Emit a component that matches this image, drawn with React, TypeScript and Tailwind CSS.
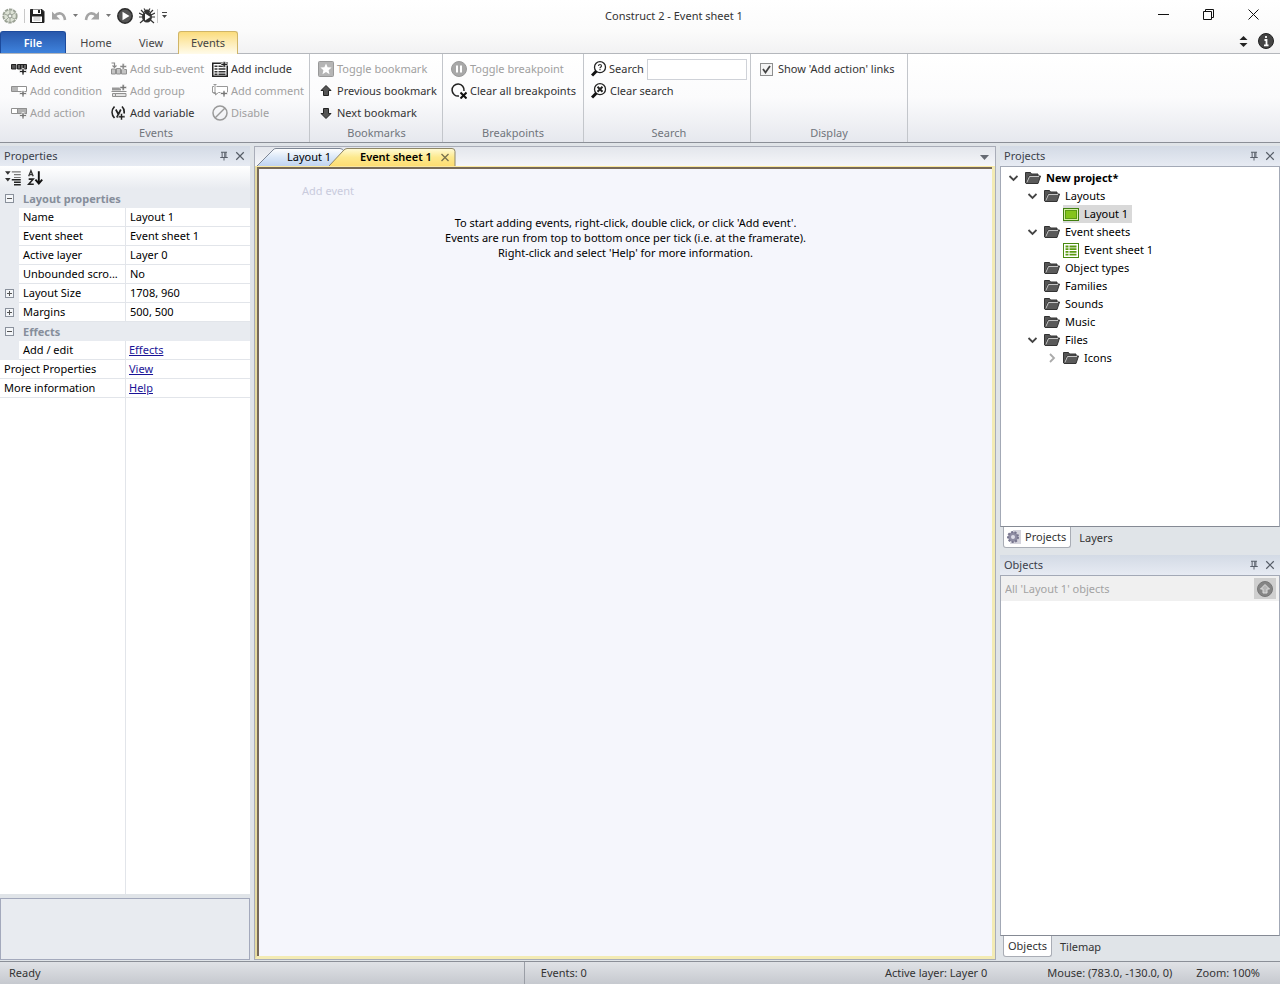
import type { ReactNode } from "react";

function Svg({ children, className = "w-4 h-4" }: { children: ReactNode; className?: string }) {
  return (
    <svg viewBox="0 0 16 16" className={`shrink-0 ${className}`} fill="none" aria-hidden="true">
      {children}
    </svg>
  );
}

const PLUS = "M11 7.500h2v2h2.500v2H13V14h-2v-2.500H8.500v-2H11z";
const PLUS_TOP = "M11.200.500h2v2h2.300v2h-2.300v2h-2v-2H9v-2h2.200z";

const icons: Record<string, ReactNode> = {
  event: (
    <Svg>
      <path d="M.5 3.500h4.500v4.500H.5z" fill="#555" stroke="#222" />
      <path d="M6.500 3.500h9v4.500h-9z" fill="#666" stroke="#222" />
      <path d="M9.500 3.500V8M12.500 3.500V8" stroke="#222" />
      <path d={PLUS} fill="#222" stroke="#fff" strokeWidth=".7" />
    </Svg>
  ),
  condition: (
    <Svg>
      <path d="M.5 3.500h15v5H.5z" fill="#fff" stroke="#8f8f8f" />
      <path d="M1 4h6v4H1z" fill="#b5b5b5" />
      <path d={PLUS} fill="#777" stroke="#fff" strokeWidth=".7" />
    </Svg>
  ),
  action: (
    <Svg>
      <path d="M.5 3.500h15v5H.5z" fill="#fff" stroke="#8f8f8f" />
      <path d="M6.500 3.500h9v5h-9z" fill="#b0b0b0" stroke="#8f8f8f" />
      <path d={PLUS} fill="#777" stroke="#fff" strokeWidth=".7" />
    </Svg>
  ),
  subEvent: (
    <Svg>
      <path d="M.5 2h3v3.500M1.500 4.500l2 2 2-2" stroke="#888" strokeWidth="1.200" />
      <path d="M.5 8h4v5h-4zM5.500 7.500h4V13h-4zM10.500 8.500h5V13h-5z" fill="#c4c4c4" stroke="#909090" />
      <path d={PLUS_TOP} transform="translate(0 2)" fill="#888" stroke="#fff" strokeWidth=".5" />
    </Svg>
  ),
  group: (
    <Svg>
      <path d="M1 4.500h9v3H1z" fill="#999" />
      <path d="M.5 8.500h15M1.500 10.500h3v3h-3zM4.500 10.500h10.500v3H4.500z" stroke="#909090" fill="#e2e2e2" />
      <path d={PLUS_TOP} transform="translate(0 1)" fill="#777" stroke="#fff" strokeWidth=".5" />
    </Svg>
  ),
  variable: (
    <Svg>
      <path d="M3.500 1.500C.3 5 .3 9.500 3.500 13M11 1.500c2 2 2.500 4.500 2 7" stroke="#222" strokeWidth="1.700" />
      <path d="m4.800 4.500 2.700 5M9.800 4.500l-4 8" stroke="#222" strokeWidth="1.700" />
      <path d="M9.500 8.500h2v2.300H14v2h-2.500V15h-2v-2.200H7.300v-2h2.200z" fill="#222" stroke="#fff" strokeWidth=".5" />
    </Svg>
  ),
  include: (
    <Svg>
      <path d="M.75 2.250h14.500v13H.75z" fill="#fff" stroke="#222" strokeWidth="1.500" />
      <path d="M2.500 5.250h3M6.500 5.250h7M2.500 8h3M6.500 8h7M2.500 10.750h3M6.500 10.750h7M2.500 13.250h3M6.500 13.250h7" stroke="#333" strokeWidth="1.600" />
      <path d={PLUS_TOP} fill="#222" stroke="#fff" strokeWidth=".6" />
    </Svg>
  ),
  comment: (
    <Svg>
      <path d="M4.500 3.500h11v6h-9l-3 2.500V9.500h-3v-6h1.500" stroke="#999" fill="#fff" />
      <path d="M1.500 1.500h3M3 1.500v9M1.500 10.500h3" stroke="#999" />
      <path d={PLUS} fill="#777" stroke="#fff" strokeWidth=".7" />
    </Svg>
  ),
  disable: (
    <Svg>
      <circle cx="8" cy="8" r="7" stroke="#999" strokeWidth="1.500" />
      <path d="m3 13 10-10" stroke="#999" strokeWidth="1.500" />
    </Svg>
  ),
  bookmark: (
    <Svg>
      <rect x=".5" y=".5" width="15" height="15" rx="1" fill="#b5b5b5" stroke="#999" />
      <path d="m8 2.500 1.600 3.800 4 .3-3 2.600.9 4L8 11l-3.500 2.200.9-4-3-2.600 4-.3z" fill="#fff" />
    </Svg>
  ),
  up: (
    <Svg>
      <path d="m8 2.500 5 5h-2.500v5h-5v-5H3z" fill="#555" stroke="#222" strokeLinejoin="round" />
    </Svg>
  ),
  down: (
    <Svg>
      <path d="m8 13.500 5-5h-2.500v-5h-5v5H3z" fill="#555" stroke="#222" strokeLinejoin="round" />
    </Svg>
  ),
  breakpoint: (
    <Svg>
      <circle cx="8" cy="8" r="7.500" fill="#a8a8a8" stroke="#999" />
      <path d="M6 4.500v7M10 4.500v7" stroke="#fff" strokeWidth="2" />
    </Svg>
  ),
  clearBreakpoints: (
    <Svg>
      <path d="M8 13A6 6 0 1 1 13 8" stroke="#222" strokeWidth="1.500" />
      <path d="m9.500 9.500 6 6m0-6-6 6" stroke="#111" strokeWidth="2" />
    </Svg>
  ),
  search: (
    <Svg>
      <circle cx="9" cy="6.200" r="5.500" fill="#fff" stroke="#222" strokeWidth="1.300" />
      <path d="M7.500 5c0-2 3-2 3 0 0 1-1.500 1-1.500 2.300M9 8v1.200" stroke="#333" strokeWidth="1.200" />
      <path d="m1 14.500 4.500-4.500" stroke="#111" strokeWidth="3" />
    </Svg>
  ),
  clearSearch: (
    <Svg>
      <circle cx="9" cy="6.200" r="5.500" fill="#fff" stroke="#222" strokeWidth="1.300" />
      <path d="m6.500 3.700 5 5m0-5-5 5" stroke="#222" strokeWidth="2" />
      <path d="m1 14.500 4.500-4.500" stroke="#111" strokeWidth="3" />
    </Svg>
  ),
  folder: (
    <Svg>
      <path d="M.5 13V2.500h5l1 1.500H13v2" fill="#555" stroke="#333" />
      <path d="M1 13.500 4 6h11.500l-2.500 7.500z" fill="#5a5a5a" stroke="#333" />
      <path d="M1.800 12.500 4.500 6.500H14" stroke="#d5d5d5" strokeWidth=".9" />
    </Svg>
  ),
  layout: (
    <Svg>
      <rect x=".5" y="2.500" width="15" height="12" fill="#d8f0a8" stroke="#3f7f10" />
      <rect x="2.500" y="4.500" width="11" height="8" fill="#84c41c" stroke="#5b9a14" />
    </Svg>
  ),
  sheet: (
    <Svg>
      <rect x=".5" y="1.500" width="15" height="14" fill="#fff" stroke="#4a8a10" />
      <path d="M2.500 4.500h3m1 0h7M2.500 7.200h3m1 0h7M2.500 9.900h3m1 0h7M2.500 12.600h3m1 0h7" stroke="#5c9c14" strokeWidth="1.800" />
    </Svg>
  ),
};

function RibbonButton({ icon, label, disabled = false }: { icon: string; label: string; disabled?: boolean }) {
  return (
    <button disabled={disabled} className="flex h-[22px] items-center gap-[3px] whitespace-nowrap text-[#333] disabled:text-[#a0a0a0]">
      {icons[icon]}
      {label}
    </button>
  );
}

function RibbonGroup({ title, className, children }: { title: string; className: string; children: ReactNode }) {
  return (
    <section className={`flex flex-col justify-between border-r border-[#c3c6cb] pt-1 ${className}`}>
      {children}
      <h2 className="pb-px text-center leading-4 text-[#71757c]">{title}</h2>
    </section>
  );
}

function PanelHeader({ title }: { title: string }) {
  return (
    <header className="flex h-5 shrink-0 items-center justify-between bg-linear-to-b from-[#d3dae5] to-[#e7ebf3] pl-1 pr-1 text-[#3b404a]">
      <h2>{title}</h2>
      <div className="flex gap-1">
        <button aria-label={`Pin ${title}`}>
          <Svg className="h-3 w-3">
            <path d="M4 3h8M5.500 3v6.500M9 3v6.500M10.500 3v6.500M3 10h10M8 10v4" stroke="#555c66" strokeWidth="1.300" />
          </Svg>
        </button>
        <button aria-label={`Close ${title}`}>
          <Svg className="h-3 w-3">
            <path d="m3 3 10 10M13 3 3 13" stroke="#555c66" strokeWidth="1.600" />
          </Svg>
        </button>
      </div>
    </header>
  );
}

function Expander({ open }: { open: boolean }) {
  return (
    <button aria-label={open ? "Collapse" : "Expand"} className="block pl-[5px]">
      <svg viewBox="0 0 9 9" className="h-[9px] w-[9px]" fill="none" aria-hidden="true">
        <rect x=".5" y=".5" width="8" height="8" fill="#f4f6f9" stroke="#8a919c" />
        <path d={open ? "M2 4.500h5" : "M2 4.500h5M4.500 2v5"} stroke="#555" />
      </svg>
    </button>
  );
}

function CategoryRow({ title }: { title: string }) {
  return (
    <tr className="h-[19px] bg-[#e8ebf0]">
      <td className="p-0">
        <Expander open />
      </td>
      <th colSpan={2} className="p-0 pl-1 text-left font-bold text-[#868e9b]">{title}</th>
    </tr>
  );
}

interface Property {
  name: string;
  value: string;
  expandable?: boolean;
}

const layoutProperties: Property[] = [
  { name: "Name", value: "Layout 1" },
  { name: "Event sheet", value: "Event sheet 1" },
  { name: "Active layer", value: "Layer 0" },
  { name: "Unbounded scro...", value: "No" },
  { name: "Layout Size", value: "1708, 960", expandable: true },
  { name: "Margins", value: "500, 500", expandable: true },
];

function PropertiesPanel() {
  return (
    <aside className="flex w-[250px] shrink-0 flex-col">
      <PanelHeader title="Properties" />
      <div className="flex h-[23px] shrink-0 items-center gap-1 bg-linear-to-b from-white to-[#e8ebf0] pl-[5px]">
        <button aria-label="Categorised">
          <Svg className="h-[18px] w-[18px]">
            <path d="M0 2h5L2.500 5zM0 8h5l-2.500 3z" fill="#333" />
            <path d="M6 2.500h8M8 5h6M8 7.500h6" stroke="#777" />
            <path d="M6 9.500h8M8 11.700h6M8 14h6" stroke="#222" strokeWidth="1.300" />
          </Svg>
        </button>
        <button aria-label="Alphabetical">
          <Svg className="h-[18px] w-[18px]">
            <path d="M1.500 6.500 3.500 1.500l2 5M2.300 5h2.500" stroke="#333" strokeWidth="1.200" />
            <path d="M1.500 9H5.500L1.500 13.500H6" stroke="#222" strokeWidth="1.400" />
            <path d="M10.500 2v10M7.500 9.500l3 3.500 3-3.500" stroke="#111" strokeWidth="1.700" />
          </Svg>
        </button>
      </div>
      <table className="w-full shrink-0 table-fixed border-separate border-spacing-0 bg-white text-black">
        <colgroup>
          <col className="w-[19px]" />
          <col className="w-[107px]" />
          <col />
        </colgroup>
        <tbody>
          <CategoryRow title="Layout properties" />
          {layoutProperties.map((p) => (
            <tr key={p.name} className="h-[19px]">
              <td className="bg-[#e8ebf0] p-0">{p.expandable && <Expander open={false} />}</td>
              <td className="whitespace-nowrap border-r border-b border-[#e2e5ea] p-0 pl-1">{p.name}</td>
              <td className="border-b border-[#e2e5ea] p-0 pl-1">{p.value}</td>
            </tr>
          ))}
          <CategoryRow title="Effects" />
          <tr className="h-[19px]">
            <td className="bg-[#e8ebf0] p-0" />
            <td className="border-r border-b border-[#e2e5ea] p-0 pl-1">Add / edit</td>
            <td className="border-b border-[#e2e5ea] p-0 pl-[3px]">
              <a href="#effects" className="text-[#1a1496] underline">Effects</a>
            </td>
          </tr>
          <tr className="h-[19px]">
            <td colSpan={2} className="border-r border-b border-[#e2e5ea] p-0 pl-1">Project Properties</td>
            <td className="border-b border-[#e2e5ea] p-0 pl-[3px]">
              <a href="#project" className="text-[#1a1496] underline">View</a>
            </td>
          </tr>
          <tr className="h-[19px]">
            <td colSpan={2} className="border-r border-b border-[#e2e5ea] p-0 pl-1">More information</td>
            <td className="border-b border-[#e2e5ea] p-0 pl-[3px]">
              <a href="#help" className="text-[#1a1496] underline">Help</a>
            </td>
          </tr>
        </tbody>
      </table>
      <div className="min-h-0 flex-1 bg-white">
        <div className="h-full w-[126px] border-r border-[#e2e5ea]" />
      </div>
      <div className="mt-1 h-[62px] shrink-0 border border-[#a3a9bc] bg-[#e8ebf0]" />
    </aside>
  );
}

function EventSheet() {
  return (
    <main className="flex min-w-0 flex-1 flex-col border border-[#a9adb8]">
      <div className="flex h-[19px] shrink-0 items-end justify-between bg-linear-to-b from-[#e3e6ec] to-[#f5f6f9] pr-0.5">
        <div className="flex">
          <button className="relative h-[18px] w-[92px] pl-[32px] text-left text-black">
            <svg viewBox="0 0 92 18" className="absolute inset-0 h-full w-full" aria-hidden="true">
              <defs>
                <linearGradient id="blueTab" x2="0" y2="1">
                  <stop offset="0" stopColor="#fff" />
                  <stop offset=".5" stopColor="#dbe8f8" />
                  <stop offset="1" stopColor="#c0d3f0" />
                </linearGradient>
              </defs>
              <path d="M2 18 18 2q1-1.500 3-1.500h64q3 0 4 3L75 18" fill="url(#blueTab)" stroke="#7d8694" />
            </svg>
            <span className="relative">Layout 1</span>
          </button>
          <button className="relative -ml-[18px] h-[18px] w-[127px] pl-[31px] text-left font-semibold text-black">
            <svg viewBox="0 0 127 18" className="absolute inset-0 h-full w-full" aria-hidden="true">
              <defs>
                <linearGradient id="goldTab" x2="0" y2="1">
                  <stop offset="0" stopColor="#fffbd8" />
                  <stop offset=".5" stopColor="#fde98d" />
                  <stop offset="1" stopColor="#fddc72" />
                </linearGradient>
              </defs>
              <path d="M0 18 14 3q2-2.500 4-2.500h105q3 0 3 3V18" fill="url(#goldTab)" stroke="#8f8766" />
              <path d="m112.500 6 7 7m0-7-7 7" stroke="#77704e" strokeWidth="1.300" />
            </svg>
            <span className="relative">Event sheet 1</span>
          </button>
        </div>
        <button aria-label="Open tabs" className="flex h-[18px] items-center px-1">
          <svg viewBox="0 0 9 5" className="h-[5px] w-[9px]" aria-hidden="true">
            <path d="M0 0h9L4.500 5z" fill="#666b73" />
          </svg>
        </button>
      </div>
      <div className="flex min-h-0 flex-1 border-[3px] border-t border-l-2 border-[#f3ebb4] border-t-[#fbe9a0] border-l-[#e6dba0]">
        <div className="flex-1 border-t-2 border-l-2 border-[#776a58] bg-[#f5f6fc] pt-[14px]">
          <button className="block pl-[43px] leading-4 text-[#c9cbdc]">Add event</button>
          <p className="pt-4 text-center leading-[15px] text-black">
            To start adding events, right-click, double click, or click 'Add event'.
            <br />
            Events are run from top to bottom once per tick (i.e. at the framerate).
            <br />
            Right-click and select 'Help' for more information.
          </p>
        </div>
      </div>
    </main>
  );
}

function TreeItem({ label, icon = "folder", open, bold = false, selected = false, children }: {
  label: string;
  icon?: string;
  open?: boolean;
  bold?: boolean;
  selected?: boolean;
  children?: ReactNode;
}) {
  return (
    <li>
      <div className="flex h-[18px] items-center">
        <span className="flex w-[17px] shrink-0 justify-start">
          {open !== undefined && (
            <button aria-label={open ? `Collapse ${label}` : `Expand ${label}`}>
              <svg viewBox="0 0 10 10" className="h-[10px] w-[10px]" fill="none" aria-hidden="true">
                <path d={open ? "m1.500 3 4 4 4-4" : "m4 1 4 4-4 4"} stroke={open ? "#444" : "#aaa"} strokeWidth="1.800" />
              </svg>
            </button>
          )}
        </span>
        <span className={`flex h-[18px] items-center gap-[3px] pr-1 ${selected ? "bg-[#d9d9d9]" : ""}`}>
          {icons[icon]}
          <span className={`pl-0.5 whitespace-nowrap ${bold ? "font-bold" : ""}`}>{label}</span>
        </span>
      </div>
      {children && <ul className="pl-[19px]">{children}</ul>}
    </li>
  );
}

function DockTabs({ tabs, gear = false }: { tabs: string[]; gear?: boolean }) {
  return (
    <div className="flex h-6 shrink-0 items-start pl-[3px] text-[#333]">
      <button className="flex h-[21px] items-center gap-[3px] rounded-b-[3px] border border-t-0 border-[#a9adb5] bg-white px-1">
        {gear && (
          <Svg className="-ml-0.5 h-4 w-4">
            <path d="M7 1h8v14H4z" fill="#d4d3dc" />
            <circle cx="7" cy="8" r="5" fill="#8f8da3" stroke="#77758e" strokeDasharray="2 1.500" strokeWidth="2" />
            <circle cx="7" cy="8" r="2" fill="#dddce8" />
          </Svg>
        )}
        {tabs[0]}
      </button>
      <button className="h-[21px] px-2">{tabs[1]}</button>
    </div>
  );
}

function SidePanels() {
  return (
    <aside className="flex w-[280px] shrink-0 flex-col">
      <section className="flex h-[405px] shrink-0 flex-col">
        <PanelHeader title="Projects" />
        <div className="flex-1 border border-[#a3a9b6] border-b-[#858a94] bg-white pt-0.5 pl-[7px] text-black">
          <ul>
            <TreeItem label="New project*" open bold>
              <TreeItem label="Layouts" open>
                <TreeItem label="Layout 1" icon="layout" selected />
              </TreeItem>
              <TreeItem label="Event sheets" open>
                <TreeItem label="Event sheet 1" icon="sheet" />
              </TreeItem>
              <TreeItem label="Object types" />
              <TreeItem label="Families" />
              <TreeItem label="Sounds" />
              <TreeItem label="Music" />
              <TreeItem label="Files" open>
                <TreeItem label="Icons" open={false} />
              </TreeItem>
            </TreeItem>
          </ul>
        </div>
        <DockTabs tabs={["Projects", "Layers"]} gear />
      </section>
      <section className="flex min-h-0 flex-1 flex-col pt-1">
        <PanelHeader title="Objects" />
        <div className="flex-1 border border-[#a3a9b6] border-b-[#858a94] bg-white">
          <div className="flex h-[25px] items-center bg-[#f0f0f0] pr-[3px]">
            <input
              aria-label="Objects filter"
              disabled
              defaultValue="All 'Layout 1' objects"
              className="min-w-0 flex-1 pl-1 text-[#a3a3a3]"
            />
            <button aria-label="Up one level" className="flex h-[21px] w-[22px] items-center justify-center bg-[#cfcfcf]">
              <Svg>
                <circle cx="8" cy="8" r="7.500" fill="#858585" stroke="#777" />
                <path d="m8 3.500 4.500 4.500H10v4H6V8H3.500z" fill="#b5b5b5" stroke="#ddd" />
              </Svg>
            </button>
          </div>
        </div>
        <DockTabs tabs={["Objects", "Tilemap"]} />
      </section>
    </aside>
  );
}

function TitleBar() {
  return (
    <header className="flex h-[31px] shrink-0 items-center bg-linear-to-b from-white to-[#fbfbfb]">
      <div className="flex w-[207px] shrink-0 items-center">
        <Svg className="ml-[2px] h-4 w-4">
          <circle cx="8" cy="8" r="6.300" fill="#d3d9cb" stroke="#9aa194" strokeWidth="2.600" strokeDasharray="3.200 .8" />
          <circle cx="8" cy="8" r="5.800" fill="#dde2d6" />
          <path d="M8 2v4M8 10v4M2.500 6l4 1.500M13 5l-3.500 2M4 12l2.500-2.500M13 11l-3.500-1.500" stroke="#a0a79a" />
          <circle cx="8" cy="8" r="2" fill="#f1f3ee" stroke="#8c9388" />
        </Svg>
        <span className="ml-[6px] h-[14px] w-px bg-[#c8c8c8]" />
        <button aria-label="Save" className="ml-1">
          <Svg>
            <path d="M1.500 1.500h11.500l2 2v11h-13.500z" fill="#222" stroke="#222" />
            <path d="M4 1.500h8v4.500H4z" fill="#fff" />
            <path d="M9 2h2v3H9z" fill="#222" />
            <path d="M3 8.500h10v5.500H3z" fill="#fff" />
            <path d="M4.500 10h7M4.500 12h7" stroke="#bbb" />
          </Svg>
        </button>
        <button aria-label="Undo" className="ml-[6px]">
          <Svg>
            <path d="M3.500 8C7 4 13 4 14 12" stroke="#a4a4a4" strokeWidth="2.600" />
            <path d="M1 3.500v8h8z" fill="#a4a4a4" />
          </Svg>
        </button>
        <button aria-label="Undo history" className="ml-[6px]">
          <svg viewBox="0 0 5 3" className="h-[3px] w-[5px]" aria-hidden="true">
            <path d="M0 0h5L2.500 3z" fill="#777" />
          </svg>
        </button>
        <button aria-label="Redo" className="ml-[6px]">
          <Svg>
            <path d="M12.500 8C9 4 3 4 2 12" stroke="#a4a4a4" strokeWidth="2.600" />
            <path d="M15 3.500v8H7z" fill="#a4a4a4" />
          </Svg>
        </button>
        <button aria-label="Redo history" className="ml-[6px]">
          <svg viewBox="0 0 5 3" className="h-[3px] w-[5px]" aria-hidden="true">
            <path d="M0 0h5L2.500 3z" fill="#777" />
          </svg>
        </button>
        <button aria-label="Run layout" className="ml-[6px]">
          <Svg>
            <circle cx="8" cy="8" r="7.200" fill="#555" stroke="#2b2b2b" strokeWidth="1.500" />
            <path d="M5.500 3.800 12.500 8l-7 4.200z" fill="#fff" />
          </Svg>
        </button>
        <button aria-label="Debug layout" className="ml-[6px]">
          <Svg>
            <path d="m2 2 3 3M14 2l-3 3M0 9h3M13 9h3M1 15l3.500-3M15 15l-3.500-3M0 5l4 2M16 5l-4 2M5 .5l2 3M11 .5l-2 3" stroke="#333" strokeWidth="1.200" />
            <ellipse cx="8" cy="9" rx="5" ry="5.500" fill="#333" />
            <path d="M5 4a3 2.500 0 0 1 6 0" fill="#333" />
            <path d="M6 5.500 11.500 9 6 12.500z" fill="#fff" />
          </Svg>
        </button>
        <span className="ml-[2px] h-[14px] w-px bg-[#c8c8c8]" />
        <button aria-label="Customise toolbar" className="ml-1">
          <svg viewBox="0 0 5 7" className="h-[7px] w-[5px]" aria-hidden="true">
            <path d="M0 0h5v1H0zM0 3h5L2.500 6z" fill="#444" />
          </svg>
        </button>
      </div>
      <h1 className="flex-1 text-center text-[#333]">Construct 2 - Event sheet 1</h1>
      <div className="flex shrink-0 pr-1 pb-0.5">
        <button aria-label="Minimise" className="flex w-[45px] justify-center">
          <svg viewBox="0 0 11 11" className="h-[11px] w-[11px]" fill="none" aria-hidden="true">
            <path d="M0 5.500h11" stroke="#111" />
          </svg>
        </button>
        <button aria-label="Restore" className="flex w-[45px] justify-center">
          <svg viewBox="0 0 11 11" className="h-[11px] w-[11px]" fill="none" aria-hidden="true">
            <path d="M.5 2.500h8v8h-8zM2.500 2.500v-2h8v8h-2" stroke="#111" />
          </svg>
        </button>
        <button aria-label="Close" className="flex w-[45px] justify-center">
          <svg viewBox="0 0 11 11" className="h-[11px] w-[11px]" fill="none" aria-hidden="true">
            <path d="m.5.5 10 10M10.500.5l-10 10" stroke="#111" />
          </svg>
        </button>
      </div>
    </header>
  );
}

function RibbonTabs() {
  return (
    <nav className="flex h-[23px] shrink-0 items-end border-b border-[#b4b7bc] bg-linear-to-b from-[#fbfbfb] to-[#f2f2f3] text-[#444]">
      <button className="h-[22px] w-[66px] rounded-t-[3px] border border-b-0 border-[#1c4a9c] bg-linear-to-b from-[#2858ac] to-[#3f83dd] font-semibold text-white">
        File
      </button>
      <button className="h-[22px] w-[60px] pt-0.5">Home</button>
      <button className="h-[22px] w-[50px] pt-0.5">View</button>
      <button className="ml-[2px] -mb-px h-[23px] w-[60px] rounded-t-[3px] border border-b-0 border-[#d0b567] bg-linear-to-b from-[#fbdc7b] to-[#fffbea]">
        Events
      </button>
      <div className="ml-auto flex h-[22px] items-center gap-[10px] pr-[6px] pb-0.5">
        <button aria-label="Toggle ribbon">
          <svg viewBox="0 0 9 13" className="h-[13px] w-[9px]" aria-hidden="true">
            <path d="M.5 5 4.500 1l4 4zM.5 8l4 4 4-4z" fill="#222" />
          </svg>
        </button>
        <button aria-label="About">
          <Svg>
            <circle cx="8" cy="8" r="7.500" fill="#444" stroke="#222" />
            <path d="M8 3v2M6.500 7h2v5M6 12.300h4.500" stroke="#fff" strokeWidth="1.800" />
          </Svg>
        </button>
      </div>
    </nav>
  );
}

function Ribbon() {
  return (
    <div className="flex h-[89px] shrink-0 border-b border-[#8b8f97] bg-linear-to-b from-white via-[#fbfbfc] to-[#e6e8ee]">
      <RibbonGroup title="Events" className="w-[310px] pl-[11px] pr-2">
        <div className="grid grid-cols-[100px_101px_auto]">
          <RibbonButton icon="event" label="Add event" />
          <RibbonButton icon="subEvent" label="Add sub-event" disabled />
          <RibbonButton icon="include" label="Add include" />
          <RibbonButton icon="condition" label="Add condition" disabled />
          <RibbonButton icon="group" label="Add group" disabled />
          <RibbonButton icon="comment" label="Add comment" disabled />
          <RibbonButton icon="action" label="Add action" disabled />
          <RibbonButton icon="variable" label="Add variable" />
          <RibbonButton icon="disable" label="Disable" disabled />
        </div>
      </RibbonGroup>
      <RibbonGroup title="Bookmarks" className="w-[133px] px-2 pr-[7px]">
        <div>
          <RibbonButton icon="bookmark" label="Toggle bookmark" disabled />
          <RibbonButton icon="up" label="Previous bookmark" />
          <RibbonButton icon="down" label="Next bookmark" />
        </div>
      </RibbonGroup>
      <RibbonGroup title="Breakpoints" className="w-[141px] px-2">
        <div>
          <RibbonButton icon="breakpoint" label="Toggle breakpoint" disabled />
          <RibbonButton icon="clearBreakpoints" label="Clear all breakpoints" />
        </div>
      </RibbonGroup>
      <RibbonGroup title="Search" className="w-[167px] pl-[7px] pr-[3px]">
        <div>
          <div className="flex h-[22px] items-center gap-[2px] text-[#333]">
            {icons.search}
            <label htmlFor="search">Search</label>
            <input id="search" type="text" className="ml-px h-[21px] min-w-0 flex-1 border border-[#cfd2d8] bg-white px-1" />
          </div>
          <RibbonButton icon="clearSearch" label="Clear search" />
        </div>
      </RibbonGroup>
      <RibbonGroup title="Display" className="w-[157px] px-[9px]">
        <label className="flex h-[22px] items-center gap-[5px] whitespace-nowrap text-[#333]">
          <span className="relative flex">
            <input type="checkbox" defaultChecked className="peer h-[13px] w-[13px] appearance-none border border-[#8e8f8f] bg-[#f4f4f4]" />
            <svg viewBox="0 0 13 13" className="pointer-events-none absolute inset-0 hidden h-[13px] w-[13px] peer-checked:block" fill="none" aria-hidden="true">
              <path d="m3 6 2.500 3.500L10 3" stroke="#444" strokeWidth="1.800" />
            </svg>
          </span>
          Show 'Add action' links
        </label>
      </RibbonGroup>
    </div>
  );
}

function StatusBar() {
  return (
    <footer className="flex h-[23px] shrink-0 items-center border-t border-[#8b8f97] bg-linear-to-b from-[#e0e2e6] to-[#c6c9cf] text-[#333]">
      <span className="flex h-full w-[41%] items-center border-r border-[#9a9ea6] pl-[9px]">Ready</span>
      <span className="pl-4">Events: 0</span>
      <span className="ml-auto">Active layer: Layer 0</span>
      <span className="ml-[60px]">Mouse: (783.0, -130.0, 0)</span>
      <span className="ml-6 mr-5">Zoom: 100%</span>
    </footer>
  );
}

export default function App() {
  return (
    <div className="flex h-screen flex-col overflow-hidden bg-[#e0e4e8] font-['Noto_Sans',sans-serif] text-[11px] leading-[18px]">
      <TitleBar />
      <RibbonTabs />
      <Ribbon />
      <div className="flex min-h-0 flex-1 gap-1 pt-[3px] pb-px">
        <PropertiesPanel />
        <EventSheet />
        <SidePanels />
      </div>
      <StatusBar />
    </div>
  );
}
